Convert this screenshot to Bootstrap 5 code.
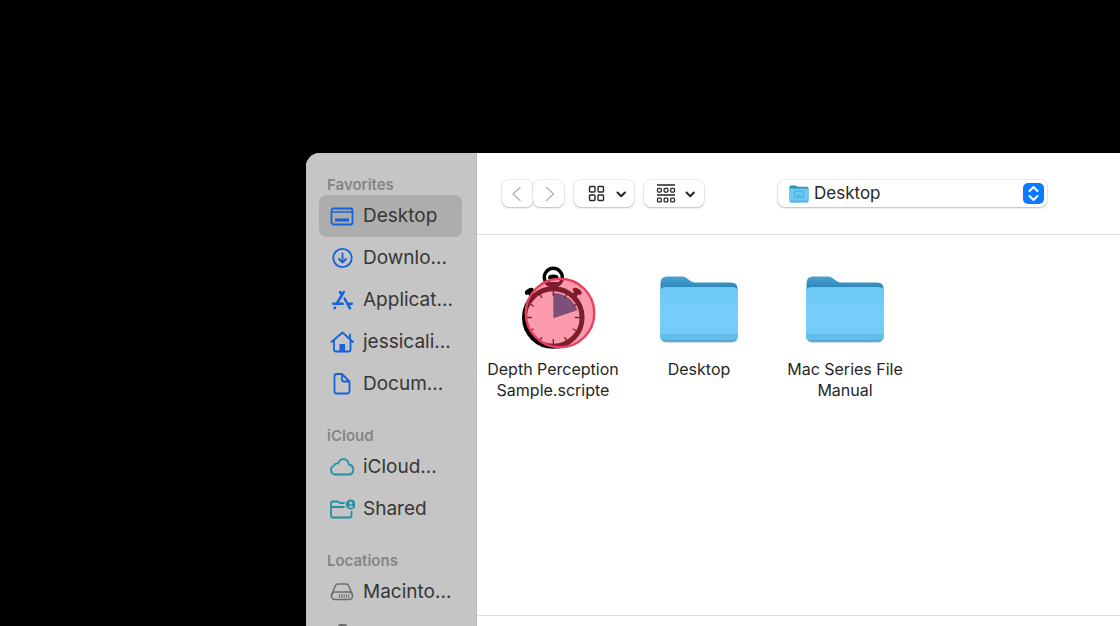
<!DOCTYPE html>
<html lang="en">
<head>
<meta charset="utf-8">
<meta name="viewport" content="width=device-width, initial-scale=1">
<title>Open – Desktop</title>
<link href="https://cdn.jsdelivr.net/npm/bootstrap@5.3.0/dist/css/bootstrap.min.css" rel="stylesheet">
<style>
body{background:#000;font-family:Inter,"Liberation Sans",sans-serif;color:#262626}
.stage{height:100vh;padding:153px 0 0 306px}
.dialog-window{background:#fff;border-top-left-radius:14px}
.side-pane{width:171px;background:#c5c5c5;border-right:1px solid #b9b9b9;padding:0 14px 0 13px}
.side-title{height:41px;padding:0 8px;font-size:15px;line-height:20px;font-weight:600;color:#858585;margin:0}
.side-title:first-child{height:42px}
.side-link{height:42px;gap:8px;padding:0 8px;font-size:19px;line-height:28px;color:#363636;text-decoration:none;border-radius:7px;white-space:nowrap}
.side-link.active{background:#adadad}
.side-link svg{width:28px;height:28px;flex:none;fill:none;stroke:#1463dc;stroke-width:1.8;stroke-linecap:round;stroke-linejoin:round}
.side-link.teal svg{stroke:#2590a5}
.side-link.gray svg{stroke:#6b6b6b}
.tool-strip{height:82px;padding-left:25px;border-bottom:1px solid #dedede}
.view-group{gap:10px}
.tool-btn{height:27px;border:0;background:#fff;border-radius:7px;padding:0;box-shadow:0 0 1px 1px #0000000f,0 1px 2px #00000038}
.tool-btn.step{width:31px}
.tool-btn.view{width:60px}
.place-box{width:269px;margin-left:74px}
.place-box select{height:27px;width:100%;border:0;border-radius:7px;background:#fff;appearance:none;padding:0 36px 2px;font-size:17px;line-height:24px;color:#262626;box-shadow:0 0 1px 1px #0000000f,0 1px 2px #00000038}
.place-icon{left:11px;top:5px;pointer-events:none}
.place-knob{right:3px;top:3px;pointer-events:none}
.files{padding:30px 0 0 3px}
.file-item{width:146px;font-size:16px;line-height:21px;color:#262626;text-decoration:none;text-align:center}
.file-item svg{width:92px;height:92px;margin-bottom:2px}
.bottom-strip{height:11px;border-top:1px solid #dedede}
</style>
</head>
<body>
<svg width="0" height="0" class="position-absolute" aria-hidden="true">
<defs>
<linearGradient id="backfill" x1="0" y1="0" x2="0" y2="1"><stop offset="0" stop-color="#4ba3d3"/><stop offset=".18" stop-color="#2e88bb"/></linearGradient>
<linearGradient id="frontfill" x1="0" y1="0" x2="0" y2="1"><stop offset="0" stop-color="#6dc8f5"/><stop offset=".5" stop-color="#76cefb"/><stop offset="1" stop-color="#70caf8"/></linearGradient>
<symbol id="folder" viewBox="0 0 92 92">
<path d="M7.500 18q0-6.500 6.500-6.500h15c6 0 7 6 13 6h36q6.500 0 6.500 6v46h-77z" fill="url(#backfill)"/>
<path d="M7 71q1 6.500 6 6.500h66q5 0 6-6.500z" fill="#9db3bf"/>
<path d="M7 27.500q0-5.500 6-5.500h66q6 0 6 5.500v43q0 6-6 6H13q-6 0-6-6z" fill="url(#frontfill)"/>
<path d="M7 70h78v.5q0 6-6 6H13q-6 0-6-6z" fill="#64bce8"/>
<path d="M7.500 69.500h77" stroke="#5fb6e3" stroke-width=".8"/>
<path d="M9 74q1.500 2.500 4 2.500h66q3 0 4.500-2.500-2 1.300-4.500 1.300H13Q10.500 75.300 9 74z" fill="#4c9fcb"/>
</symbol>
</defs>
</svg>
<div class="stage d-flex overflow-hidden">
<div class="dialog-window d-flex flex-grow-1 overflow-hidden">
<nav class="side-pane d-flex flex-column flex-shrink-0 overflow-hidden" aria-label="Sidebar">
<h2 class="side-title d-flex align-items-end flex-shrink-0">Favorites</h2>
<a class="side-link active d-flex align-items-center flex-shrink-0" href="#"><svg viewBox="0 0 28 28"><rect x="4.500" y="6.500" width="21" height="16" rx="2"/><path d="M4.500 10h21" stroke-width="1.500"/><path d="M8 16.500h14v3H8z" fill="#1463dc" stroke="none"/></svg>Desktop</a>
<a class="side-link d-flex align-items-center flex-shrink-0" href="#"><svg viewBox="0 0 28 28"><circle cx="15.500" cy="14" r="9.200"/><path d="M15.500 9.500v9M12 15l3.500 3.500L19 15"/></svg>Downlo...</a>
<a class="side-link d-flex align-items-center flex-shrink-0" href="#"><svg viewBox="0 0 28 28"><g stroke-width="2.500"><path d="M16.800 6L9.800 17.500M13 6l1.800 3M17.500 12.500l5.500 9.800"/><path d="M6.200 17.800h9.500M21.500 17.800h3.300M8 21.500l-.4.800"/></g></svg>Applicat...</a>
<a class="side-link d-flex align-items-center flex-shrink-0" href="#"><svg viewBox="0 0 28 28"><path d="M4.500 14L15.500 4.500 26 14M7 12v9.500q0 2 2 2h12.500q2 0 2-2V12M23 10.500V6.500"/><path d="M12.500 23.500V16H18v7.500z" fill="#1463dc" stroke="none"/></svg>jessicali...</a>
<a class="side-link d-flex align-items-center flex-shrink-0" href="#"><svg viewBox="0 0 28 28"><path d="M9.500 4H15l7.500 7.500V21q0 2.500-2.500 2.500H9.500Q7.500 23.500 7.500 21V6.500Q7.500 4 9.500 4zM15 4.500v5q0 2 2 2h5"/></svg>Docum...</a>
<h2 class="side-title d-flex align-items-end flex-shrink-0">iCloud</h2>
<a class="side-link teal d-flex align-items-center flex-shrink-0" href="#"><svg viewBox="0 0 28 28"><path d="M8 21.500A4.700 4.700 0 0 1 7 12.500Q8 10 11 10.500C13.500 4 21 5 21.800 11.500c6 1 6 10-.5 10z"/></svg>iCloud...</a>
<a class="side-link teal d-flex align-items-center flex-shrink-0" href="#"><svg viewBox="0 0 28 28"><path d="M17 8h-4l-2-1.500H6Q4 6.500 4 8.500v12q0 2 2 2h16.500q2 0 2-2V17M4 12h13"/><circle cx="23.800" cy="9.500" r="5" fill="#2590a5" stroke="none"/><circle cx="23.800" cy="8" r="1.600" fill="#c5c5c5" stroke="none"/><path d="M21 12.500q2.800-3.800 5.600 0z" fill="#c5c5c5" stroke="none"/></svg>Shared</a>
<h2 class="side-title d-flex align-items-end flex-shrink-0">Locations</h2>
<a class="side-link gray d-flex align-items-center flex-shrink-0" href="#"><svg viewBox="0 0 28 28"><path d="M4.500 17L8.500 7.500q.7-1.500 2.500-1.500h8q1.800 0 2.500 1.500L25.500 17" stroke-width="1.500"/><rect x="4.500" y="14" width="21" height="7.500" rx="3.500" stroke-width="1.500"/><path d="M12.500 16.500v3M14.800 16.500v3M17.100 16.500v3M19.400 16.500v3M21.700 16.500v3" stroke-width="1"/></svg>Macinto...</a>
<a class="side-link gray d-flex align-items-center flex-shrink-0" href="#"><svg viewBox="0 0 28 28"><rect x="11.500" y="5" width="8" height="14" rx="2"/></svg>Googl...</a>
</nav>
<main class="d-flex flex-column flex-grow-1 overflow-hidden">
<div class="tool-strip d-flex align-items-center flex-shrink-0">
<div class="view-group d-flex">
<div class="d-flex">
<button class="tool-btn step d-flex align-items-center justify-content-center" type="button" aria-label="Back"><svg width="14" height="18" fill="none" stroke="#b5b5b5" stroke-width="1.500" stroke-linecap="round" stroke-linejoin="round"><path d="M9 2.500L2 9l7 6.500"/></svg></button>
<button class="tool-btn step d-flex align-items-center justify-content-center" type="button" aria-label="Forward"><svg width="14" height="18" fill="none" stroke="#b5b5b5" stroke-width="1.500" stroke-linecap="round" stroke-linejoin="round"><path d="M4.500 2.500l7 6.500-7 6.500"/></svg></button>
</div>
<button class="tool-btn view d-flex align-items-center justify-content-center" type="button" aria-label="Icon view"><svg width="44" height="18" fill="none" stroke="#262626" stroke-width="1.400"><rect x="7.500" y="1.500" width="5.500" height="5.500" rx="1"/><rect x="16" y="1.500" width="5.500" height="5.500" rx="1"/><rect x="7.500" y="10" width="5.500" height="5.500" rx="1"/><rect x="16" y="10" width="5.500" height="5.500" rx="1"/><path d="M35.500 7.500l3.700 3.700 3.700-3.700" stroke-width="2" stroke-linecap="round" stroke-linejoin="round"/></svg></button>
<button class="tool-btn view d-flex align-items-center justify-content-center" type="button" aria-label="Group items"><svg width="44" height="20" fill="none" stroke="#262626" stroke-width="1.300"><path d="M5 1h18M5 11h18"/><rect x="5.500" y="4.300" width="3.800" height="3.800" rx="1"/><rect x="12.100" y="4.300" width="3.800" height="3.800" rx="1"/><rect x="18.700" y="4.300" width="3.800" height="3.800" rx="1"/><rect x="5.500" y="14.100" width="3.800" height="3.800" rx="1"/><rect x="12.100" y="14.100" width="3.800" height="3.800" rx="1"/><rect x="18.700" y="14.100" width="3.800" height="3.800" rx="1"/><path d="M34.500 8.500l3.700 3.700 3.700-3.700" stroke-width="2" stroke-linecap="round" stroke-linejoin="round"/></svg></button>
</div>
<div class="place-box position-relative">
<select aria-label="Location"><option>Desktop</option></select>
<svg class="place-icon position-absolute" width="20" height="18"><path d="M.5 2Q.5.500 2 .5h5q1 1.300 2.500 1.300h8.500q1.500 0 1.500 1.500V15H.5z" fill="#2f93b8"/><path d="M.5 3.500h19V16q0 1.500-1.500 1.500H2Q.5 17.500.5 16z" fill="#6cc9f2"/><path d="M.5 15.500h19q0 2-1.500 2H2q-1.500 0-1.500-2z" fill="#5ab5df"/><rect x="5.500" y="6" width="9" height="6.500" rx="1" fill="none" stroke="#45a8d3"/><path d="M7.500 10.500h5" stroke="#45a8d3"/></svg>
<svg class="place-knob position-absolute" width="21" height="21" fill="none"><rect width="21" height="21" rx="5" fill="#0a7aff"/><path d="M6.500 8l4-4 4 4M6.500 13l4 4 4-4" stroke="#fff" stroke-width="2" stroke-linecap="round" stroke-linejoin="round"/></svg>
</div>
</div>
<div class="files d-flex align-items-start flex-grow-1">
<a class="file-item d-flex flex-column align-items-center" href="#"><svg viewBox="0 0 92 92">
<circle cx="46.300" cy="12.300" r="9" fill="none" stroke="#000" stroke-width="3.400"/>
<path d="M41 12.500q0-3 5.300-3t5.300 3q0 1.500-1.500 1.500h-7.600q-1.500 0-1.500-1.500zM39.500 17h13.600q0 4-4.300 4.800V27h-5v-5.200q-4.300-.8-4.300-4.800z"/>
<g id="side-knob"><path d="M-5-1q0-3 5-3t5 3q0 1.500-1.500 1.500H2.500V6h-5V.500h-1Q-5 .5-5-1z" transform="translate(69.500 27.500) rotate(32)"/></g>
<path d="M-5-1q0-3 5-3t5 3q0 1.500-1.500 1.500H2.500V6h-5V.500h-1Q-5 .5-5-1z" transform="translate(23 27.500) rotate(-32)"/>
<circle cx="46.300" cy="52.500" r="28.800" fill="#fff" stroke="#000" stroke-width="5"/>
<path d="M46.300 53.300V28a25.300 25.300 0 0 1 24 17.300z" fill="#00689a"/>
<path d="M46.300 26v5M46.300 79v-5M19.800 52.500h5M72.800 52.500h-5M33 29.600l2 3.400M59.500 29.600l-2 3.400M23.400 39.300l3.400 2M69.200 39.300l-3.400 2M23.400 65.800l3.400-2M69.200 65.800l-3.400-2M33 75.400l2-3.400M59.500 75.400l-2-3.400" stroke="#000" stroke-width="1.300"/>
<circle cx="53" cy="48" r="34.200" fill="#f83858" fill-opacity=".5"/>
<circle cx="53" cy="48" r="34.300" fill="none" stroke="#e9405f" stroke-width="2.400"/>
</svg><span>Depth Perception<br>Sample.scripte</span></a>
<a class="file-item d-flex flex-column align-items-center" href="#"><svg><use href="#folder"/></svg>Desktop</a>
<a class="file-item d-flex flex-column align-items-center" href="#"><svg><use href="#folder"/></svg><span>Mac Series File<br>Manual</span></a>
</div>
<div class="bottom-strip flex-shrink-0"></div>
</main>
</div>
</div>
<script src="https://cdn.jsdelivr.net/npm/bootstrap@5.3.0/dist/js/bootstrap.bundle.min.js"></script>
</body>
</html>
